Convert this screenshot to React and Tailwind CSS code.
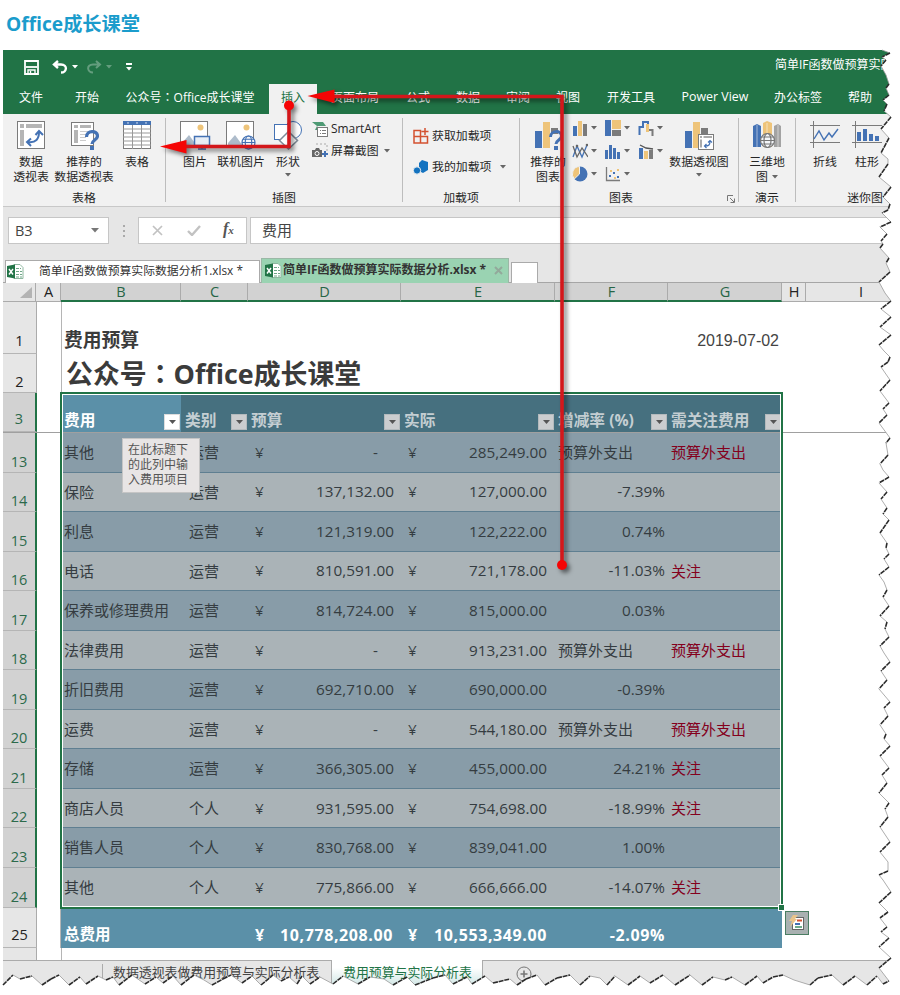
import React from "react";

const BLUE = "#4472b4";
const SAND = "#eec47a";
const GRAY = "#7b7b7b";

const Colon = () => <span className="font-['Noto_Sans_CJK_TC',sans-serif]">：</span>;

const Account = () => (
  <span>
    公众号
    <Colon />
    Office成长课堂
  </span>
);

const tabs = [
  { name: "文件", w: "w-14" },
  { name: "开始", w: "w-14" },
  { name: <Account />, w: "w-[150px] mr-1" },
  { name: "插入", w: "w-12", active: true },
  { name: "页面布局", w: "w-[76px]" },
  { name: "公式", w: "w-[50px]" },
  { name: "数据", w: "w-[50px]" },
  { name: "审阅", w: "w-[50px]" },
  { name: "视图", w: "w-[50px]" },
  { name: "开发工具", w: "w-[76px]" },
  { name: "Power View", w: "w-[92px] text-[12.400px]" },
  { name: "办公标签", w: "w-[74px]" },
  { name: "帮助", w: "w-[50px]" },
];

const columns = [
  { name: "A", w: "w-[25px]" },
  { name: "B", w: "w-[120px]", selected: true },
  { name: "C", w: "w-[67px]", selected: true },
  { name: "D", w: "w-[153px]", selected: true },
  { name: "E", w: "w-[154px]", selected: true },
  { name: "F", w: "w-[113px]", selected: true },
  { name: "G", w: "w-[114px]", selected: true },
  { name: "H", w: "w-[24px]" },
  { name: "I", w: "w-[110px]" },
];

const headers = [
  { name: "费用", w: "w-[120px] pl-[3px]", first: true },
  { name: "类别", w: "w-[67px] pl-[4px]" },
  { name: "预算", w: "w-[153px] pl-[3px]" },
  { name: "实际", w: "w-[154px] pl-[3px]" },
  { name: "增减率 (%)", w: "w-[113px] pl-[3px]" },
  { name: "需关注费用", w: "w-[114px] pl-[3px]" },
];

const OUT = "预算外支出";

const rows = [
  [13, "其他", "运营", "-", "285,249.00", OUT, OUT],
  [14, "保险", "运营", "137,132.00", "127,000.00", "-7.39%", ""],
  [15, "利息", "运营", "121,319.00", "122,222.00", "0.74%", ""],
  [16, "电话", "运营", "810,591.00", "721,178.00", "-11.03%", "关注"],
  [17, "保养或修理费用", "运营", "814,724.00", "815,000.00", "0.03%", ""],
  [18, "法律费用", "运营", "-", "913,231.00", OUT, OUT],
  [19, "折旧费用", "运营", "692,710.00", "690,000.00", "-0.39%", ""],
  [20, "运费", "运营", "-", "544,180.00", OUT, OUT],
  [21, "存储", "运营", "366,305.00", "455,000.00", "24.21%", "关注"],
  [22, "商店人员", "个人", "931,595.00", "754,698.00", "-18.99%", "关注"],
  [23, "销售人员", "个人", "830,768.00", "839,041.00", "1.00%", ""],
  [24, "其他", "个人", "775,866.00", "666,666.00", "-14.07%", "关注"],
];

// torn paper outline, right side top to bottom
const rightEdge = [
  [882, 50], [890, 53], [882, 57], [886, 60], [881, 66], [886, 75], [889, 84], [886, 88],
  [889, 95], [883, 100], [887, 104], [884, 111], [891, 117], [881, 129], [889, 138],
  [881, 153], [888, 159], [888, 164], [879, 177], [891, 187], [883, 197], [890, 204],
  [888, 210], [882, 213], [886, 217], [891, 222], [880, 227], [887, 234], [881, 241],
  [883, 244], [880, 248], [889, 258], [886, 263], [890, 272], [879, 282], [885, 293],
  [891, 301], [881, 309], [891, 317], [880, 327], [891, 335], [879, 345], [884, 351],
  [890, 357], [888, 362], [881, 367], [890, 380], [880, 391], [889, 403], [883, 409],
  [887, 415], [879, 423], [890, 438], [886, 443], [888, 455], [880, 464], [883, 470],
  [889, 477], [879, 483], [887, 492], [881, 499], [887, 508], [883, 514], [889, 520],
  [880, 533], [887, 543], [886, 548], [889, 554], [884, 559], [889, 567], [879, 575],
  [884, 582], [887, 590], [883, 597], [889, 606], [880, 616], [887, 622], [885, 629],
  [889, 637], [880, 646], [884, 653], [890, 662], [881, 671], [887, 680], [879, 689],
  [890, 702], [884, 708], [888, 716], [880, 725], [886, 734], [884, 739], [890, 746],
  [880, 756], [889, 768], [882, 775], [887, 783], [879, 793], [889, 803], [885, 809],
  [888, 817], [880, 827], [884, 833], [890, 842], [880, 852], [888, 862], [888, 871],
  [879, 875], [883, 880], [891, 892], [879, 903], [888, 912], [880, 918], [887, 927],
  [881, 932], [889, 938], [879, 947], [891, 958], [879, 968], [889, 981],
];

// bottom side, left to right
const bottomEdge = [
  [3, 985], [13, 975], [20, 979], [32, 976], [42, 985], [51, 979], [59, 975], [69, 985],
  [80, 977], [86, 984], [98, 976], [106, 980], [113, 977], [119, 985], [132, 975],
  [145, 984], [156, 977], [163, 983], [173, 976], [181, 985], [194, 975], [204, 980],
  [212, 985], [223, 979], [231, 975], [242, 983], [252, 976], [261, 985], [273, 975],
  [281, 981], [289, 977], [297, 984], [302, 976], [310, 984], [320, 977], [333, 984],
  [343, 976], [358, 984], [370, 977], [384, 979], [393, 985], [407, 977], [415, 985],
  [433, 978], [445, 975], [453, 984], [467, 977], [472, 984], [485, 976], [493, 983],
  [510, 979], [517, 985], [526, 979], [537, 975], [545, 985], [557, 978], [570, 975],
  [580, 985], [590, 976], [600, 978], [607, 985], [615, 976], [628, 985], [640, 976],
  [650, 983], [663, 975], [675, 985], [690, 975], [702, 985], [713, 977], [725, 980],
  [732, 977], [745, 985], [757, 976], [763, 983], [773, 977], [783, 975], [794, 980],
  [810, 985], [818, 978], [832, 975], [843, 985], [855, 976], [867, 985], [877, 976],
  [883, 984], [889, 981],
];

const toPoints = (list) => list.map((p) => p.join(",")).join(" ");

const TornEdge = ({ points }) => (
  <g>
    {points.slice(1).map((p, i) => {
      const q = points[i];
      const dark = (p[0] - q[0]) * (p[1] - q[1]) < 0;
      return (
        <line
          key={i}
          x1={q[0]}
          y1={q[1]}
          x2={p[0]}
          y2={p[1]}
          stroke={dark ? "#2b2b2b" : "#999"}
          strokeWidth={dark ? 1.6 : 0.8}
          strokeDasharray={dark ? "5 0.8" : undefined}
        />
      );
    })}
  </g>
);

const PaperTear = () => (
  <svg
    className="absolute left-0 top-0 pointer-events-none"
    width="900"
    height="995"
    viewBox="0 0 900 995"
  >
    <polygon points={`${toPoints(rightEdge)} 900,981 900,45 882,45`} fill="#fff" />
    <polygon points={`${toPoints(bottomEdge)} 900,981 900,995 0,995 0,985`} fill="#fff" />
    <TornEdge points={rightEdge} />
    <TornEdge points={bottomEdge} />
  </svg>
);

const RedArrows = () => (
  <svg
    className="absolute left-0 top-0 pointer-events-none"
    width="900"
    height="995"
    viewBox="0 0 900 995"
    style={{ filter: "drop-shadow(3px 3px 2px rgba(0,0,0,0.5))" }}
  >
    <g fill="none" stroke="#d3171b" strokeWidth="3.6">
      <path d="M562 565V96.500H330" />
      <path d="M289 105V146.500H184" />
    </g>
    <g fill="#f50505">
      <circle cx="562" cy="565" r="5" />
      <circle cx="289" cy="105.500" r="5" />
      <path d="M307.500 96L334.500 89.500V103z" />
      <path d="M160 146.500L186.500 140V153.500z" />
    </g>
  </svg>
);

const Caret = ({ className = "text-[#666]" }) => (
  <svg className={className} width="6" height="4" viewBox="0 0 6 4">
    <path d="M0 0h6L3 3.500z" fill="currentColor" />
  </svg>
);

const Icon = ({ children, w = 30, h = 30 }) => (
  <svg width={w} height={h} viewBox={`0 0 ${w} ${h}`} fill="none" className="shrink-0">
    {children}
  </svg>
);

const PivotIcon = () => (
  <Icon>
    <rect x="1.500" y="1.500" width="27" height="27" fill="#fff" stroke={GRAY} />
    <path d="M4 4h4v4H4zM10 4h16v4H10zM4 10h4v16H4z" fill="#b5b5b5" />
    <path d="M12 22c8 1 11-3 11-10" stroke={BLUE} strokeWidth="2" />
    <path d="M19.500 15L23 11l4 4M15 18.500L11 22l4 4" stroke={BLUE} strokeWidth="2" />
  </Icon>
);

const RecommendedPivotIcon = () => (
  <Icon>
    <rect x="2.500" y="2.500" width="22" height="23" fill="#fff" stroke={GRAY} />
    <path d="M5 5h4v3H5zM11 5h11v3H11zM5 10h4v13H5z" fill="#b5b5b5" />
    <path d="M11 11.500h10M11 14.500h8M11 17.500h6M11 20.500h6" stroke="#ccc" />
    <path d="M17.500 17c0-7 11-7 11-1 0 4-5.500 4-5.500 8" stroke={BLUE} strokeWidth="3.200" />
    <path d="M21 26h4v4h-4z" fill={BLUE} />
  </Icon>
);

const TableIcon = () => (
  <Icon>
    <rect x="1.500" y="1.500" width="27" height="27" fill="#fff" stroke={GRAY} />
    <path d="M1 1h28v4H1z" fill={BLUE} />
    <path
      d="M1 9h28M1 13h28M1 17h28M1 21h28M1 25h28M10.500 5v24M19.500 5v24"
      stroke="#999"
    />
    <path d="M5 2.500h2L6 4zM14 2.500h2L15 4zM23 2.500h2L24 4z" fill="#fff" />
  </Icon>
);

const Photo = () => (
  <>
    <rect x="1.500" y="1.500" width="27" height="26" fill="#fff" stroke={GRAY} />
    <circle cx="21.500" cy="7.500" r="3" fill={SAND} />
    <path d="M3 26v-3l7-8 8 11z" fill="#aebccb" />
  </>
);

const PictureIcon = () => (
  <Icon w={32}>
    <Photo />
    <rect x="15.500" y="16.500" width="15" height="9" fill="#e8eef6" stroke={BLUE} strokeWidth="1.500" />
    <path d="M19 29h8M23 26v3" stroke={BLUE} strokeWidth="1.500" />
  </Icon>
);

const Globe = ({ x, y, r, color }) => (
  <g stroke={color} strokeWidth="1.200" fill="#f4f6f9">
    <circle cx={x} cy={y} r={r} />
    <ellipse cx={x} cy={y} rx={r / 2} ry={r} fill="none" />
    <path d={`M${x - r} ${y}h${2 * r}M${x - r + 1} ${y - r / 2}h${2 * r - 2}M${x - r + 1} ${y + r / 2}h${2 * r - 2}`} />
  </g>
);

const OnlinePictureIcon = () => (
  <Icon w={32}>
    <Photo />
    <Globe x={23.500} y={22.500} r={6.500} color={BLUE} />
  </Icon>
);

const ShapesIcon = () => (
  <Icon>
    <circle cx="20" cy="10" r="8.500" fill="#fff" stroke={BLUE} />
    <rect x="1.500" y="4.500" width="15" height="15" fill="#fff" stroke={BLUE} />
    <path d="M15.500 11.500l9 9-9 8.500-9-8.500z" fill="#fff" stroke="#7f8c99" strokeWidth="1.500" />
  </Icon>
);

const RecommendedChartIcon = () => (
  <Icon>
    <path d="M2 11h7v17H2z" fill={BLUE} />
    <path d="M10 2h7v26h-7z" fill={SAND} />
    <path d="M18 8h7v6h-7z" fill={GRAY} />
    <path d="M17.500 17c0-7 11-7 11-1 0 4-5.500 4-5.500 8" stroke={BLUE} strokeWidth="3" />
    <path d="M21 26h4v4h-4z" fill={BLUE} />
  </Icon>
);

const PivotChartIcon = () => (
  <Icon w={32}>
    <path d="M2 11h7v17H2z" fill={BLUE} />
    <path d="M10 2h7v26h-7z" fill={SAND} />
    <path d="M18 8h7v6h-7z" fill={GRAY} />
    <rect x="15.500" y="14.500" width="15" height="15" fill="#fff" stroke={GRAY} />
    <path d="M17 16h2v2h-2zM20.500 16h8.500v2h-8.500zM17 19.500h2v8h-2z" fill="#aaa" />
    <path d="M22 26c4 0 5-1 5-5M25 22.500l2-2 2 2M23.500 24l-2 2 2 2" stroke={BLUE} strokeWidth="1.200" />
  </Icon>
);

const MapIcon = () => (
  <Icon>
    <path d="M1 6l4-2 4 2v21H1z" fill={BLUE} />
    <path d="M11 3l4-2 5 2v24h-9z" fill={SAND} />
    <path d="M22 6l4-2 3 2v21h-7z" fill="#a3a3a3" />
    <path d="M5 5v22M15 3v22M26 5v22" stroke="#fff" strokeOpacity="0.5" />
    <Globe x={15.500} y={20.500} r={7} color="#777" />
  </Icon>
);

const LineSparkIcon = () => (
  <Icon>
    <path d="M0 5.500h30M0 22.500h30M3.500 1v27" stroke={GRAY} />
    <path d="M4 19l5-8 5 9 5-7 3 4 6-8" stroke={BLUE} strokeWidth="1.400" />
  </Icon>
);

const ColumnSparkIcon = () => (
  <Icon>
    <path d="M0 5.500h30M0 22.500h30M3.500 1v27" stroke={GRAY} />
    <path d="M5 12h4v9H5zM11 9h4v12h-4zM17 14h4v7h-4zM23 16h4v5h-4z" fill={BLUE} />
  </Icon>
);

const miniCharts = [
  <>
    <path d="M1 6h4v10H1z" fill={BLUE} />
    <path d="M6 1h4v15H6z" fill={SAND} />
    <path d="M11 4h4v12h-4z" fill={GRAY} />
  </>,
  <>
    <path d="M0 0h6v16H0z" fill={BLUE} />
    <path d="M7 0h9v9H7z" fill={SAND} />
    <path d="M7 10h9v6H7z" fill={GRAY} />
  </>,
  <>
    <path d="M1.500 15V7H5V2h5v4" stroke={BLUE} strokeWidth="2" />
    <path d="M8 4h3v8H8z" fill={SAND} />
    <path d="M11 10h3.500v6" stroke={GRAY} strokeWidth="2" />
  </>,
  <>
    <path d="M1 14L5 3l5 11 5-12" stroke={BLUE} strokeWidth="1.300" />
    <path d="M1 3l4 11 5-9 6 9" stroke="#666" strokeWidth="1.300" />
    <circle cx="5" cy="3" r="1.300" fill="#666" />
    <circle cx="15" cy="2" r="1.300" fill="#666" />
  </>,
  <path d="M0 7h3v9H0zM4 2h3v14H4zM8 5h3v11H8zM12 9h3v7h-3z" fill={BLUE} />,
  <>
    <path d="M1 5h4v11H1z" fill={BLUE} />
    <path d="M6 8h4v8H6z" fill={SAND} />
    <path d="M11 7h4v9h-4z" fill={GRAY} />
    <path d="M2 2l6 3 7 1" stroke="#555" strokeWidth="1.300" />
  </>,
  <>
    <circle cx="8" cy="8" r="7.500" fill={BLUE} />
    <path d="M7.500 8V.5A7.500 7.500 0 0 0 2.300 13z" fill={SAND} stroke="#f1f1f1" />
  </>,
  <>
    <path d="M1.500 1v13.500H15" stroke={GRAY} strokeWidth="1.300" />
    <path d="M4 9h2v2H4zM8 6h2v2H8zM12 10h2v2h-2z" fill={BLUE} />
    <path d="M5 4h2v2H5zM9 11h2v2H9zM12 3h2v2h-2z" fill={SAND} />
  </>,
];

const BigButton = ({ icon, lines, caret, inlineCaret, className }) => (
  <div className={`flex flex-col items-center shrink-0 ${className}`}>
    {icon}
    <div className="mt-1 flex flex-col items-center">
      {lines.map((line, i) => (
        <span
          key={line}
          className="h-[15px] leading-[15px] whitespace-nowrap flex items-center gap-1"
        >
          {line}
          {inlineCaret && i === lines.length - 1 && <Caret />}
        </span>
      ))}
      {caret && (
        <div className="mt-[4px]">
          <Caret />
        </div>
      )}
    </div>
  </div>
);

const Group = ({ label, className, labelClass = "", children }) => (
  <div className={`relative flex flex-col justify-between pt-[6px] pb-px shrink-0 ${className}`}>
    <div className="flex items-start">{children}</div>
    <div className={`text-center leading-[16px] ${labelClass}`}>{label}</div>
  </div>
);

const Divider = () => <div className="w-px h-[84px] mt-1 bg-[#bdbdbd] shrink-0" />;

const TitleBar = () => (
  <div className="h-[34px] flex items-center text-white pl-[21px]">
    <Icon w={15} h={15}>
      <path d="M1 1h13v13H1z" stroke="#fff" strokeWidth="1.800" />
      <path d="M2 7h11" stroke="#fff" strokeWidth="1.800" />
      <path d="M4 14v-4h7v4M6.500 11v3" stroke="#fff" strokeWidth="1.400" />
    </Icon>
    <div className="ml-[13px] flex items-center gap-[4px]">
      <Icon w={16} h={14}>
        <path d="M6 1L2 4.500 6 8M2 4.500h7c7 0 6 8 0 8" stroke="#fff" strokeWidth="2.400" />
      </Icon>
      <Caret className="text-white" />
    </div>
    <div className="ml-[8px] flex items-center gap-[4px] opacity-30">
      <Icon w={16} h={14}>
        <path d="M10 1l4 3.500L10 8M14 4.500H7c-7 0-6 8 0 8" stroke="#fff" strokeWidth="2" />
      </Icon>
      <Caret className="text-white" />
    </div>
    <div className="ml-[14px] flex flex-col items-center gap-[2px]">
      <div className="w-[6px] h-[1.500px] bg-white" />
      <Caret className="text-white" />
    </div>
    <span className="ml-[643px] mt-[-4px] text-[12px] whitespace-nowrap">
      简单IF函数做预算实际
    </span>
  </div>
);

const Ribbon = () => (
  <div className="h-[93px] flex bg-[#f1f1f1] border-b border-[#c8c8c8] text-[11.900px] text-[#262626] overflow-hidden">
    <Group label="表格" className="w-[162px]">
      <BigButton className="w-14" icon={<PivotIcon />} lines={["数据", "透视表"]} />
      <BigButton className="w-[50px]" icon={<RecommendedPivotIcon />} lines={["推荐的", "数据透视表"]} />
      <BigButton className="w-14" icon={<TableIcon />} lines={["表格"]} />
    </Group>
    <Divider />
    <Group label="插图" className="w-[236px]">
      <BigButton className="w-[46px] ml-[6px]" icon={<PictureIcon />} lines={["图片"]} />
      <BigButton className="w-[46px]" icon={<OnlinePictureIcon />} lines={["联机图片"]} />
      <BigButton className="w-12" icon={<ShapesIcon />} lines={["形状"]} caret />
      <div className="flex flex-col gap-[5px]">
        <div className="flex items-center gap-[2px] h-[17px]">
          <Icon w={17} h={16}>
            <path d="M0 1h11l3 4h-9L8 9H3l2-4z" fill="#4e9a74" />
            <rect x="5.500" y="6.500" width="10" height="9" fill="#fff" stroke={GRAY} />
            <path d="M8 9.500h1M10 9.500h4M8 12.500h1M10 12.500h4" stroke={GRAY} />
          </Icon>
          <span>SmartArt</span>
        </div>
        <div className="flex items-center gap-[2px] h-[17px]">
          <Icon w={17} h={16}>
            <path d="M4 1h11v8" stroke="#aaa" strokeDasharray="2 2" />
            <path d="M0 7h3l1-2h3l1 2h2v7H0z" fill="#666" />
            <circle cx="5" cy="10.500" r="2" fill="#666" stroke="#fff" />
            <path d="M13 8v6M10 11h6" stroke={BLUE} strokeWidth="2" />
          </Icon>
          <span>屏幕截图</span>
          <span className="ml-[3px]">
            <Caret />
          </span>
        </div>
      </div>
    </Group>
    <Divider />
    <Group label="加载项" className="w-[116px]">
      <div className="flex flex-col gap-[15px] pl-[10px] pt-[8px]">
        <div className="flex items-center gap-[3px] h-4">
          <Icon w={16} h={16}>
            <path d="M1 2.500h6.500v12.500H1zM1 8.500h13.500v6.500H7.500v-6.500M12 0v7M8.500 3.500h7" stroke="#d35230" strokeWidth="1.500" />
          </Icon>
          <span>获取加载项</span>
        </div>
        <div className="flex items-center gap-[3px] h-4">
          <Icon w={16} h={16}>
            <path d="M9 1l6 2v8l-5 3-4-2V4z" fill="#1473c0" />
            <circle cx="4" cy="11.500" r="3.700" fill="#1473c0" stroke="#f1f1f1" />
          </Icon>
          <span>我的加载项</span>
          <span className="ml-[6px]">
            <Caret />
          </span>
        </div>
      </div>
    </Group>
    <Divider />
    <Group label="图表" className="w-[218px]" labelClass="pr-4">
      <BigButton className="w-12 ml-[4px]" icon={<RecommendedChartIcon />} lines={["推荐的", "图表"]} />
      <div className="grid grid-cols-3 gap-y-[7px] w-[99px]">
        {miniCharts.map((chart, i) => (
          <div key={i} className="flex items-center gap-[3px]">
            <Icon w={16} h={16}>
              {chart}
            </Icon>
            <Caret />
          </div>
        ))}
      </div>
      <BigButton className="w-[56px]" icon={<PivotChartIcon />} lines={["数据透视图"]} caret />
      <svg className="absolute right-[3px] bottom-[3px]" width="8" height="8" viewBox="0 0 8 8">
        <path d="M.5 6V.5H6M3 3l4 4M7.500 3.500v4h-4" stroke="#777" fill="none" />
      </svg>
    </Group>
    <Divider />
    <Group label="演示" className="w-[56px]">
      <BigButton className="w-[56px]" icon={<MapIcon />} lines={["三维地", "图"]} inlineCaret />
    </Group>
    <Divider />
    <Group label="迷你图" className="w-[130px]" labelClass="pl-[8px]">
      <BigButton className="w-[42px] ml-[8px]" icon={<LineSparkIcon />} lines={["折线"]} />
      <BigButton className="w-[42px]" icon={<ColumnSparkIcon />} lines={["柱形"]} />
    </Group>
  </div>
);

const FormulaBar = () => (
  <div className="h-[50px] flex pt-[10px] pl-[5px] text-[15px] text-[#444]">
    <div className="w-[101px] h-[27px] bg-white border border-[#c6c6c6] flex items-center justify-between pl-[6px] pr-[9px]">
      <span className="text-[14.500px]">B3</span>
      <svg width="8" height="5" viewBox="0 0 8 5">
        <path d="M0 0h8L4 4.500z" fill="#777" />
      </svg>
    </div>
    <div className="w-[29px] h-[27px] flex flex-col items-center justify-center gap-[3px]">
      <div className="w-[2px] h-[2px] bg-[#aaa]" />
      <div className="w-[2px] h-[2px] bg-[#aaa]" />
      <div className="w-[2px] h-[2px] bg-[#aaa]" />
    </div>
    <div className="w-[109px] h-[27px] bg-white border border-[#c6c6c6] flex items-center pl-[13px]">
      <Icon w={11} h={11}>
        <path d="M1 1l9 9M10 1l-9 9" stroke="#c2c2c2" strokeWidth="1.700" />
      </Icon>
      <span className="ml-[24px]">
        <Icon w={14} h={11}>
          <path d="M1 6l4 4 8-9" stroke="#c2c2c2" strokeWidth="2.400" />
        </Icon>
      </span>
      <span className="ml-[22px] mt-[-3px] font-['Liberation_Serif',serif] italic font-bold text-[16px] text-[#555]">
        f<span className="text-[11px]">x</span>
      </span>
    </div>
    <div className="ml-[3px] flex-1 h-[27px] bg-white border border-[#c6c6c6] flex items-center pl-[11px]">
      费用
    </div>
  </div>
);

const XlsIcon = () => (
  <Icon w={17} h={17}>
    <path d="M7 1.500h6l3 3v11H7z" fill="#fff" stroke="#8fb8a0" />
    <path d="M9 5.500h5M9 8.500h6M9 11.500h6M9 14h6" stroke="#6ea686" strokeDasharray="3 1" />
    <path d="M0 3l8-1.500v14L0 14z" fill="#217346" />
    <path d="M2 6l4 5.500M6 6l-4 5.500" stroke="#fff" strokeWidth="1.400" />
  </Icon>
);

const FileTabs = () => (
  <div className="h-[26px] flex items-end pl-[2px] text-[12px] text-[#333]">
    <div className="w-[255px] h-[23px] bg-white border border-b-0 border-[#aaa] flex items-center pb-[2px] pl-px">
      <XlsIcon />
      <span className="ml-[15px] whitespace-nowrap text-[11.850px]">
        简单IF函数做预算实际数据分析1.xlsx *
      </span>
    </div>
    <div className="ml-px w-[248px] h-[25px] bg-[#9ad3b2] border border-b-0 border-[#9bb8a6] flex items-center pb-[2px] pl-[3px]">
      <XlsIcon />
      <span className="ml-px whitespace-nowrap font-bold">简单IF函数做预算实际数据分析.xlsx *</span>
      <span className="ml-auto mr-[5px]">
        <Icon w={9} h={9}>
          <path d="M1 1l7 7M8 1L1 8" stroke="#93a99b" strokeWidth="2" />
        </Icon>
      </span>
    </div>
    <div className="ml-[2px] w-[27px] h-[21px] bg-white border border-b-0 border-[#aaa]" />
  </div>
);

const ColumnHeader = () => (
  <div className="h-[20px] -mt-px flex border-t border-[#a6a6a6] bg-[#e6e6e6] text-[14.500px] text-[#222]">
    <div className="w-[33px] border-r border-b border-[#ababab] flex justify-end items-end pr-[3px] pb-[3px] shrink-0">
      <svg width="12" height="11" viewBox="0 0 12 11">
        <path d="M12 0v11H0z" fill="#b3b3b3" />
      </svg>
    </div>
    {columns.map((c) => (
      <div
        key={c.name}
        className={`${c.w} shrink-0 flex items-center justify-center pl-px border-r ${
          c.selected
            ? "bg-[#d2d2d2] text-[#276546] border-r-[#ababab] border-b-2 border-b-[#217346]"
            : "border-r-[#ababab] border-b border-b-[#ababab]"
        }`}
      >
        {c.name}
      </div>
    ))}
  </div>
);

const RowNumber = ({ n, selected, className = "" }) => (
  <div
    className={`w-[34px] shrink-0 flex items-end justify-center text-[14.500px] leading-[20px] border-b border-b-[#b5b5b5] ${
      selected
        ? "bg-[#d2d2d2] text-[#2c6a4b] border-r-2 border-r-[#217346]"
        : "bg-[#e6e6e6] text-[#222] border-r border-r-[#ababab]"
    } ${className}`}
  >
    {n}
  </div>
);

const FilterButton = ({ first }) => (
  <div
    className={`w-4 h-4 mr-px mb-[2px] shrink-0 flex items-center justify-center border ${
      first ? "bg-white border-[#ddd]" : "bg-[#cbcdcf] border-[#b4babd]"
    }`}
  >
    <svg width="7" height="4" viewBox="0 0 7 4">
      <path d="M0 0h7L3.500 4z" fill="#555" />
    </svg>
  </div>
);

const Amount = ({ value, className }) => (
  <div className={`flex justify-between items-center pl-[7px] shrink-0 ${className}`}>
    <span>¥</span>
    <span className={value === "-" ? "mr-[16px]" : ""}>{value}</span>
  </div>
);

const Sheet = () => (
  <div className="relative bg-white h-[658px] overflow-hidden">
    <div className="h-[52px] flex">
      <RowNumber n={1} className="pb-[2px]" />
      <div className="w-[25px] border-r border-[#b5b5b5]" />
      <div className="w-[721px] flex items-end justify-between pl-[2px] pr-[4px] pb-[2px] text-[#3b3b3b]">
        <span className="text-[18.800px] leading-[24px] font-bold">费用预算</span>
        <span className="font-['Liberation_Sans',sans-serif] text-[16px] leading-[22px] text-[#444]">2019-07-02</span>
      </div>
    </div>
    <div className="h-[39px] flex">
      <RowNumber n={2} />
      <div className="w-[25px] border-r border-[#b5b5b5]" />
      <div className="pl-[4px] text-[26.900px] leading-[38px] font-bold text-[#3b3b3b] whitespace-nowrap">
        <Account />
      </div>
    </div>
    <div className="h-[40px] flex border-b border-[#a0a0a0]">
      <RowNumber n={3} selected className="pb-[2px]" />
      <div className="w-[24px] shrink-0" />
      {headers.map((h) => (
        <div
          key={h.name}
          className={`${h.w} shrink-0 flex items-end justify-between ${
            h.first ? "bg-[#5b90a8] text-white" : "bg-[#46707f] text-[#c4ced2]"
          }`}
        >
          <span className="text-[15.700px] leading-[24px] font-bold whitespace-nowrap">{h.name}</span>
          <FilterButton first={h.first} />
        </div>
      ))}
    </div>
    {rows.map(([n, item, kind, budget, actual, rate, note], i) => (
      <div key={n} className="h-[39.550px] flex text-[15.300px] text-[#353c41]">
        <RowNumber n={n} selected />
        <div className="w-[24px] shrink-0" />
        <div
          className={`flex items-center border-b border-[#5f7f91] ${
            i % 2 ? "bg-[#aab3b7]" : "bg-[#889ca8]"
          }`}
        >
          <div className="w-[120px] pl-[3px] text-[15px] whitespace-nowrap">{item}</div>
          <div className="w-[67px] pl-[8px] text-[15px]">{kind}</div>
          <Amount value={budget} className="w-[153px] pr-[7px]" />
          <Amount value={actual} className="w-[154px] pr-[8px]" />
          {rate === OUT ? (
            <div className="w-[113px] pl-[3px] text-[15px]">{rate}</div>
          ) : (
            <div className="w-[113px] pr-[3px] text-right">{rate}</div>
          )}
          <div className="w-[114px] pl-[3px] text-[15px] text-[#84001c]">{note}</div>
        </div>
      </div>
    ))}
    <div className="h-[40px] flex text-[16px] font-bold text-white">
      <RowNumber n={25} className="font-normal pb-[2px]" />
      <div className="w-[24px] shrink-0 border-r border-[#b5b5b5]" />
      <div className="flex items-center bg-[#5b90a8] pt-[14px]">
        <div className="w-[187px] pl-[3px] text-[15.500px]">总费用</div>
        <Amount value="10,778,208.00" className="w-[153px] pr-[8px] tracking-[0.600px]" />
        <Amount value="10,553,349.00" className="w-[154px] pr-[8px] tracking-[0.600px]" />
        <div className="w-[113px] pr-[3px] text-right tracking-[0.600px]">-2.09%</div>
        <div className="w-[114px]" />
      </div>
    </div>
    <div className="h-[14px] flex">
      <RowNumber n="" />
      <div className="w-[25px] shrink-0 border-r border-[#b5b5b5]" />
    </div>

    {/* selection outline */}
    <div className="absolute left-[57px] top-[90px] w-[723px] h-[517px] border-2 border-[#217346]">
      <div className="w-full h-full border border-white" />
      <div className="absolute -right-[4px] -bottom-[4px] w-[7px] h-[7px] bg-[#217346] border border-white" />
    </div>

    {/* freeze line */}
    <div className="absolute left-[780px] top-[130px] w-[108px] h-px bg-[#a0a0a0]" />

    {/* quick analysis */}
    <div className="absolute left-[782px] top-[609px] w-6 h-6 bg-[#a9b1b1] border border-[#4a7d62] flex items-center justify-center">
      <Icon w={18} h={18}>
        <rect x="4.500" y="3.500" width="11" height="12" fill="#fff" stroke="#666" />
        <path d="M9 6.500h5" stroke="#d35230" strokeWidth="2" />
        <path d="M7 10h5" stroke={BLUE} strokeWidth="2" />
        <path d="M7 13h7" stroke="#3c8f63" strokeWidth="1.500" />
        <path d="M5 1h5L7 5h2l-7 8 2-6H1z" fill="#e9c48b" />
      </Icon>
    </div>

    {/* input hint */}
    <div className="absolute left-[119px] top-[136px] w-[78px] h-[55px] bg-[#e8e5e5] border border-[#c5c5c5] pl-[5px] pt-[3px] text-[12px] leading-[15px] text-[#555]">
      在此标题下
      <br />
      的此列中输
      <br />
      入费用项目
    </div>
  </div>
);

const SheetTabs = () => (
  <div className="h-[26px] flex border-t border-[#ababab] bg-[#e6e6e6] text-[12.900px] text-[#444]">
    <div className="w-[100px] border-r border-[#ababab] mt-[3px] h-[14px]" />
    <div className="w-[229px] border-r border-[#ababab] pl-[10px] leading-[22px] whitespace-nowrap">
      数据透视表做费用预算与实际分析表
    </div>
    <div className="w-[151px] -mt-px pl-[11px] leading-[24px] whitespace-nowrap text-[#217346] border-r border-[#ababab] bg-gradient-to-b from-white from-30% to-[#cfe6e4]">
      费用预算与实际分析表
    </div>
    <div className="ml-[33px] mt-[5px]">
      <Icon w={16} h={16}>
        <circle cx="8" cy="8" r="7" stroke="#777" />
        <path d="M8 4.500v7M4.500 8h7" stroke="#777" strokeWidth="1.600" />
      </Icon>
    </div>
  </div>
);

const App = () => {
  return (
    <div className="relative w-[900px] h-[995px] bg-white overflow-hidden font-['Open_Sans','Noto_Sans_CJK_SC',sans-serif]">
      <h1 className="h-[50px] pl-[6px] text-[19.200px] leading-[47px] font-bold text-[#1b9ccc]">
        Office成长课堂
      </h1>
      <div className="ml-[3px] w-[888px] bg-[#e6e6e6]">
        <div className="h-[64px] bg-[#217346]">
          <TitleBar />
          <div className="flex h-[30px] text-[12px]">
            {tabs.map((t, i) => (
              <div
                key={i}
                className={`${t.w} shrink-0 flex items-center justify-center pb-[3px] whitespace-nowrap ${
                  t.active ? "bg-[#f1f1f1] text-[#217346]" : "text-white"
                }`}
              >
                {t.name}
              </div>
            ))}
          </div>
        </div>
        <Ribbon />
        <FormulaBar />
        <FileTabs />
        <ColumnHeader />
        <Sheet />
        <SheetTabs />
      </div>
      <RedArrows />
      <PaperTear />
    </div>
  );
};

export default App;
